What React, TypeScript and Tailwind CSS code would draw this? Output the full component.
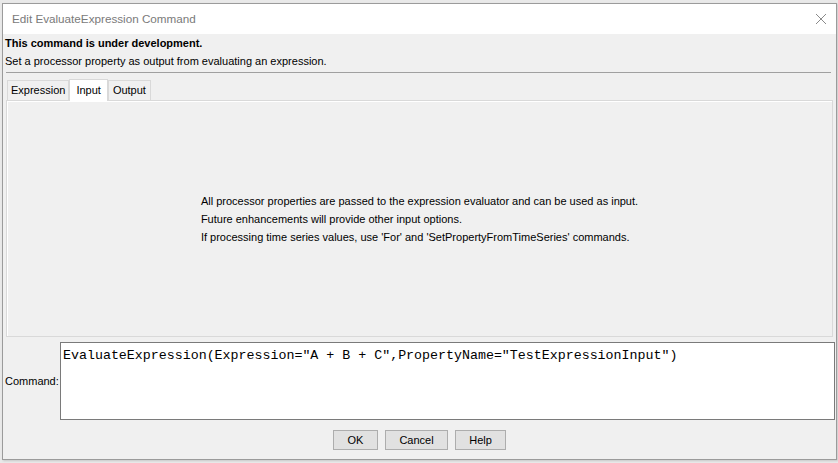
import React from 'react';

const ui = "font-['Liberation_Sans',Arial,sans-serif]";

function Tab({ label, selected, pad }: { label: string; selected?: boolean; pad: string }) {
  if (selected) {
    return (
      <div className={`relative -mb-px z-10 flex h-[22px] items-center border border-b-0 border-[#d9d9d9] bg-white ${pad} text-[11px] text-black`}>
        {label}
      </div>
    );
  }
  return (
    <div className={`mt-[1px] flex h-[20px] items-center border border-b-0 border-[#d9d9d9] bg-[#f0f0f0] ${pad} text-[11px] text-black`}>
      {label}
    </div>
  );
}

function Button({ label, width }: { label: string; width: string }) {
  return (
    <button
      className={`${width} h-[20px] border border-[#adadad] bg-[#e1e1e1] text-[11px] text-black ${ui}`}
    >
      {label}
    </button>
  );
}

export default function App() {
  return (
    <div className={`w-[838px] h-[463px] overflow-hidden bg-[#e9e9e9] pt-[3px] pl-[2px] pr-[1px] pb-[3px] ${ui}`}>
      <div className="flex h-full flex-col border border-[#9b9b9b] bg-[#f0f0f0] shadow-[1px_1px_2px_rgba(0,0,0,0.15)]">
        {/* Title bar */}
        <div className="flex h-[30px] shrink-0 items-center justify-between bg-white pl-[9px] pr-[8px]">
          <span className="text-[11.7px] text-[#7a7a7a]">Edit EvaluateExpression Command</span>
          <svg width="12" height="12" viewBox="0 0 12 12" className="mr-[1px]">
            <path d="M1 1 L11 11 M11 1 L1 11" stroke="#8a8a8a" strokeWidth="1" />
          </svg>
        </div>

        {/* Header text */}
        <div className="px-[2px]">
          <div className="h-[18px] text-[11px] font-bold leading-[18px] text-black">
            This command is under development.
          </div>
          <div className="h-[18px] text-[11px] leading-[18px] text-black">
            Set a processor property as output from evaluating an expression.
          </div>
        </div>
        <div className="ml-[3px] mr-[5px] mt-[2px] h-px bg-[#a0a0a0]" />

        {/* Tabs */}
        <div className="ml-[3px] mr-[3px] mt-[6px] flex flex-col">
          <div className="flex pl-[1px]">
            <Tab label="Expression" pad="px-[3px]" />
            <Tab label="Input" selected pad="px-[6px]" />
            <Tab label="Output" pad="px-[4px]" />
          </div>
          <div className="flex h-[237px] items-center justify-center border border-[#d9d9d9] bg-[#f0f0f0] shadow-[inset_1px_1px_0_#ffffff]">
            <div className="text-[11px] leading-[18px] text-black">
              <div>All processor properties are passed to the expression evaluator and can be used as input.</div>
              <div>Future enhancements will provide other input options.</div>
              <div>If processing time series values, use 'For' and 'SetPropertyFromTimeSeries' commands.</div>
            </div>
          </div>
        </div>

        {/* Command */}
        <div className="mt-[5px] flex items-center pl-[2px] pr-[1px]">
          <span className="w-[55px] text-[11px] text-black">Command:</span>
          <div className="h-[78px] flex-1 border border-[#7a7a7a] bg-white px-[2px] pt-[5px] font-['Liberation_Mono','Courier_New',monospace] text-[13.3px] leading-[16px] text-black">
            EvaluateExpression(Expression="A + B + C",PropertyName="TestExpressionInput")
          </div>
        </div>

        {/* Buttons */}
        <div className="mt-[10px] flex justify-center gap-[7px]">
          <Button label="OK" width="w-[45px]" />
          <Button label="Cancel" width="w-[63px]" />
          <Button label="Help" width="w-[51px]" />
        </div>
      </div>
    </div>
  );
}
